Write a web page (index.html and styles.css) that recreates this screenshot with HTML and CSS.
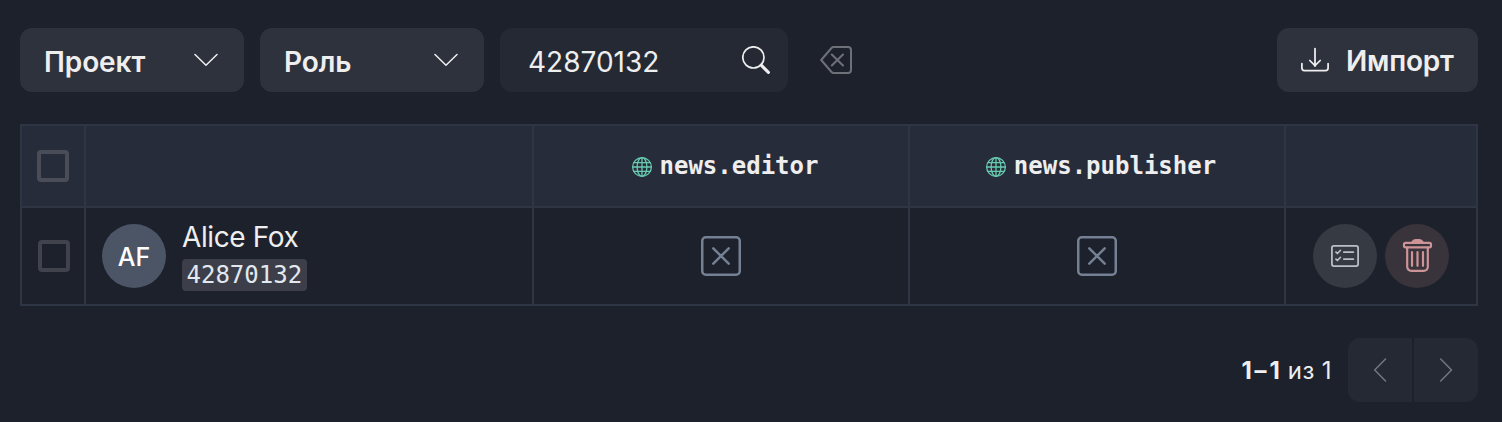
FILE: index.html
```html
<!DOCTYPE html>
<html lang="ru">
<head>
<meta charset="utf-8">
<title>Роли</title>
<link rel="stylesheet" href="styles.css">
</head>
<body>
<svg width="0" height="0" class="defs">
  <symbol id="x-square" viewBox="0 0 40 40"><rect x="1.25" y="1.25" width="37.5" height="37.5" rx="3.6" stroke-width="2.5"/><path d="M12.3 12.3l15.4 15.4M27.7 12.3l-15.4 15.4" stroke-width="2.5"/></symbol>
  <symbol id="globe" viewBox="0 0 20 20"><circle cx="10" cy="10" r="9.35"/><ellipse cx="10" cy="10" rx="4.9" ry="9.35"/><path d="M10 .6v18.8M.6 10h18.8M1.9 5.6h16.2M1.9 14.4h16.2"/></symbol>
</svg>
<main class="page">
  <div class="toolbar">
    <button class="button select"><span>Проект</span><svg class="chevron" viewBox="0 0 24 24"><path d="M1 5.5l11 10.8L23 5.5"/></svg></button>
    <button class="button select"><span>Роль</span><svg class="chevron" viewBox="0 0 24 24"><path d="M1 5.5l11 10.8L23 5.5"/></svg></button>
    <div class="search"><span>42870132</span><svg class="search-icon" viewBox="0 0 28 28"><circle cx="11.4" cy="11.4" r="10.6" stroke-width="1.7"/><path d="M19.2 19.2l7.2 7.2" stroke-width="3.1"/></svg></div>
    <svg class="clear" viewBox="0 0 32 32"><path d="M13.7 3H28a3 3 0 0 1 3 3v20a3 3 0 0 1-3 3H13.7a3 3 0 0 1-2.2-1L1.2 16l10.3-12a3 3 0 0 1 2.2-1zM11.8 10.5L23 21.5M23 10.5L11.8 21.5"/></svg>
    <button class="button import"><svg class="download" viewBox="0 0 28 28"><path d="M.9 17.5v4.4a2.6 2.6 0 0 0 2.6 2.6h21a2.6 2.6 0 0 0 2.6-2.6v-4.4M14 2.6v17.6M8.8 14.5l5.2 5.2 5.2-5.2"/></svg><span>Импорт</span></button>
  </div>
  <div class="table">
    <div class="cell head"><span class="checkbox head-checkbox"></span></div>
    <div class="cell head"></div>
    <div class="cell head role"><svg class="globe"><use href="#globe"/></svg><span>news.editor</span></div>
    <div class="cell head role"><svg class="globe"><use href="#globe"/></svg><span>news.publisher</span></div>
    <div class="cell head"></div>
    <div class="cell"><span class="checkbox"></span></div>
    <div class="cell user"><span class="avatar">AF</span><div class="identity"><span class="name">Alice Fox</span><code class="code">42870132</code></div></div>
    <div class="cell"><svg class="x-square"><use href="#x-square"/></svg></div>
    <div class="cell"><svg class="x-square"><use href="#x-square"/></svg></div>
    <div class="cell actions">
      <button class="round details"><svg class="checklist" viewBox="0 0 28 28"><rect x=".9" y="3.9" width="26.2" height="20.2" rx="2"/><path d="M12.8 10h9.6M12.8 17h9.6M5 10.1l1.4 1.4L9.3 8.5M5 17.1l1.4 1.4L9.3 15.5"/></svg></button>
      <button class="round remove"><svg class="trash" viewBox="0 0 32 36"><path class="handle" d="M11.5 4q1-2 3-2h4q2 0 3 2z"/><rect x="3" y="4.8" width="27" height="4.6" rx="1.6"/><path d="M6.2 9.6v19.2a4 4 0 0 0 4 4h12.6a4 4 0 0 0 4-4v-19.2M11 14.2v13.6M16.5 14.2v13.6M22 14.2v13.6"/></svg></button>
    </div>
  </div>
  <div class="pagination">
    <span class="range"><b>1–1</b> из 1</span>
    <div class="pager"><button class="page-button"><svg class="chevron" viewBox="0 0 24 24"><path d="M17.5 1L6.7 12l10.8 11"/></svg></button><button class="page-button"><svg class="chevron" viewBox="0 0 24 24"><path d="M6.7 1l10.8 11L6.7 23"/></svg></button></div>
  </div>
</main>
</body>
</html>
```
FILE: styles.css
```css
* { box-sizing: border-box; }
body { margin: 0; background: #1d212b; color: #eeeeef; font: 28px/36px Inter, sans-serif; }
button { border: 0; margin: 0; padding: 0; color: inherit; font: inherit; }
svg { display: block; flex: none; fill: none; stroke: currentColor; stroke-linecap: round; stroke-linejoin: round; }
.defs { position: absolute; }
.page { height: 422px; padding: 28px 24px 20px 20px; display: flex; flex-direction: column; }
.toolbar { display: flex; align-items: center; gap: 16px; height: 64px; }
.button { height: 64px; border-radius: 12px; background: #2e323c; font-weight: 600; display: flex; align-items: center; }
.select { width: 224px; padding: 2px 26px 0 24px; justify-content: space-between; letter-spacing: -.1px; }
.select span { padding-top: 1px; }
.chevron { width: 24px; height: 24px; stroke-width: 1.5; }
.search { width: 288px; height: 64px; border-radius: 12px; background: #252933; padding: 3px 18px 0 28px; display: flex; align-items: center; justify-content: space-between; }
.search-icon { width: 28px; height: 28px; margin-bottom: 3px; }
.clear { width: 32px; height: 32px; margin-left: 16px; color: #6e7078; stroke-width: 2; }
.import { width: 201px; margin-left: auto; padding-left: 24px; gap: 17px; letter-spacing: -.2px; }
.import span { padding-top: 1px; }
.download { width: 28px; height: 28px; stroke-width: 1.75; }
.table { margin-top: 32px; display: grid; grid-template-columns: 62px 446px 374px 374px 190px; grid-template-rows: 80px 96px; gap: 2px; padding: 2px; background: #2e3544; }
.cell { background: #1d212b; display: flex; align-items: center; justify-content: center; min-width: 0; }
.head { background: #272c3a; }
.checkbox { width: 32px; height: 32px; border: 4px solid #40434c; border-radius: 4px; margin-left: 2px; }
.head-checkbox { border-color: #4a4d57; margin-left: 0; }
.role { font: bold 24px/32px "DejaVu Sans Mono", monospace; gap: 8px; padding-left: 8px; }
.globe { width: 20px; height: 20px; margin-top: 2px; color: #68cbb0; stroke-width: 1.3; }
.user { justify-content: flex-start; padding-left: 16px; gap: 16px; }
.avatar { width: 64px; height: 64px; border-radius: 50%; background: #4c5566; color: #fff; display: flex; align-items: center; justify-content: center; font-size: 25px; font-weight: 500; padding-top: 2px; }
.identity { display: flex; flex-direction: column; align-items: flex-start; padding-bottom: 8px; }
.name { line-height: 40px; margin-top: 3px; margin-bottom: 2px; letter-spacing: -.4px; }
.code { background: #3c3f49; border-radius: 4px; height: 32px; padding: 0 4.5px; font: 24px/32px "DejaVu Sans Mono", monospace; color: #e2e8f0; }
.x-square { width: 40px; height: 40px; color: #748094; }
.actions { gap: 8px; }
.round { width: 64px; height: 64px; border-radius: 50%; display: flex; align-items: center; justify-content: center; }
.details { background: #363a43; color: #b9c0ca; }
.remove { background: #39333c; color: #cd9497; }
.checklist { width: 28px; height: 28px; stroke-width: 1.75; }
.trash { width: 32px; height: 36px; stroke-width: 2.2; }
.handle { fill: currentColor; }
.pagination { margin-top: 32px; display: flex; justify-content: flex-end; align-items: center; gap: 16px; font-size: 24px; }
.range { padding-top: 2px; letter-spacing: .4px; }
.range b { font-weight: 700; letter-spacing: 2.8px; margin-right: -1.9px; }
.pager { display: flex; gap: 2px; border-radius: 12px; overflow: hidden; }
.page-button { width: 64px; height: 64px; background: #252933; color: #74767d; display: flex; align-items: center; justify-content: center; }
```
